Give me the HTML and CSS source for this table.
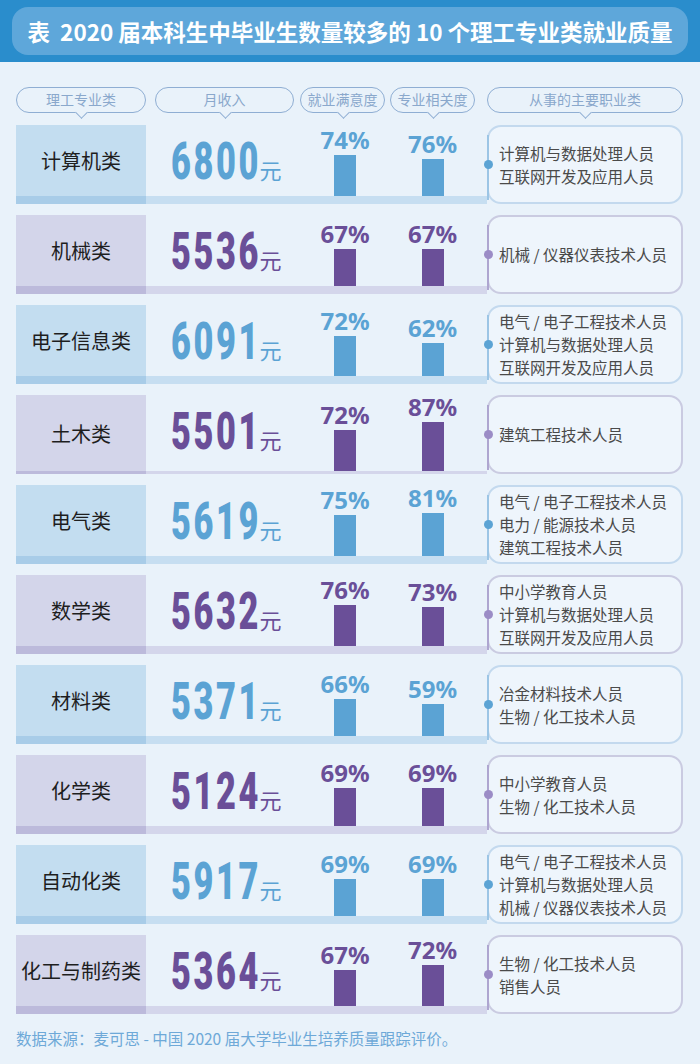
FILE: index.html
```html
<!DOCTYPE html>
<html lang="zh-CN">
<head>
<meta charset="utf-8">
<title>2020届理工专业类就业质量</title>
<link rel="stylesheet" href="styles.css">
</head>
<body>
<div class="titlebar">
  <div class="titlepill">表&nbsp; 2020 届本科生中毕业生数量较多的 10 个理工专业类就业质量</div>
</div>

<div class="heads">
  <div class="hp hp-major">理工专业类</div>
  <div class="hp hp-income">月收入</div>
  <div class="hp hp-pct">就业满意度</div>
  <div class="hp hp-pct">专业相关度</div>
  <div class="hp hp-job">从事的主要职业类</div>
</div>

<div class="rows">
  <div class="row blue">
    <div class="main">
      <div class="cells">
        <div class="label">计算机类</div>
        <div class="income"><span class="num">6800</span><span class="yuan">元</span></div>
        <div class="pct"><span class="pv">74%</span><span class="bar" style="height:41px"></span></div>
        <div class="pct"><span class="pv">76%</span><span class="bar" style="height:37px"></span></div>
      </div>
      <div class="strip"></div>
    </div>
    <div class="jobs"><span>计算机与数据处理人员</span><span>互联网开发及应用人员</span></div>
  </div>

  <div class="row purple">
    <div class="main">
      <div class="cells">
        <div class="label">机械类</div>
        <div class="income"><span class="num">5536</span><span class="yuan">元</span></div>
        <div class="pct"><span class="pv">67%</span><span class="bar" style="height:37px"></span></div>
        <div class="pct"><span class="pv">67%</span><span class="bar" style="height:37px"></span></div>
      </div>
      <div class="strip"></div>
    </div>
    <div class="jobs"><span>机械 / 仪器仪表技术人员</span></div>
  </div>

  <div class="row blue">
    <div class="main">
      <div class="cells">
        <div class="label">电子信息类</div>
        <div class="income"><span class="num">6091</span><span class="yuan">元</span></div>
        <div class="pct"><span class="pv">72%</span><span class="bar" style="height:40px"></span></div>
        <div class="pct"><span class="pv">62%</span><span class="bar" style="height:33px"></span></div>
      </div>
      <div class="strip"></div>
    </div>
    <div class="jobs"><span>电气 / 电子工程技术人员</span><span>计算机与数据处理人员</span><span>互联网开发及应用人员</span></div>
  </div>

  <div class="row purple">
    <div class="main">
      <div class="cells">
        <div class="label">土木类</div>
        <div class="income"><span class="num">5501</span><span class="yuan">元</span></div>
        <div class="pct"><span class="pv">72%</span><span class="bar" style="height:41px"></span></div>
        <div class="pct"><span class="pv">87%</span><span class="bar" style="height:49px"></span></div>
      </div>
      <div class="strip"></div>
    </div>
    <div class="jobs"><span>建筑工程技术人员</span></div>
  </div>

  <div class="row blue">
    <div class="main">
      <div class="cells">
        <div class="label">电气类</div>
        <div class="income"><span class="num">5619</span><span class="yuan">元</span></div>
        <div class="pct"><span class="pv">75%</span><span class="bar" style="height:41px"></span></div>
        <div class="pct"><span class="pv">81%</span><span class="bar" style="height:43px"></span></div>
      </div>
      <div class="strip"></div>
    </div>
    <div class="jobs"><span>电气 / 电子工程技术人员</span><span>电力 / 能源技术人员</span><span>建筑工程技术人员</span></div>
  </div>

  <div class="row purple">
    <div class="main">
      <div class="cells">
        <div class="label">数学类</div>
        <div class="income"><span class="num">5632</span><span class="yuan">元</span></div>
        <div class="pct"><span class="pv">76%</span><span class="bar" style="height:41px"></span></div>
        <div class="pct"><span class="pv">73%</span><span class="bar" style="height:39px"></span></div>
      </div>
      <div class="strip"></div>
    </div>
    <div class="jobs"><span>中小学教育人员</span><span>计算机与数据处理人员</span><span>互联网开发及应用人员</span></div>
  </div>

  <div class="row blue">
    <div class="main">
      <div class="cells">
        <div class="label">材料类</div>
        <div class="income"><span class="num">5371</span><span class="yuan">元</span></div>
        <div class="pct"><span class="pv">66%</span><span class="bar" style="height:37px"></span></div>
        <div class="pct"><span class="pv">59%</span><span class="bar" style="height:32px"></span></div>
      </div>
      <div class="strip"></div>
    </div>
    <div class="jobs"><span>冶金材料技术人员</span><span>生物 / 化工技术人员</span></div>
  </div>

  <div class="row purple">
    <div class="main">
      <div class="cells">
        <div class="label">化学类</div>
        <div class="income"><span class="num">5124</span><span class="yuan">元</span></div>
        <div class="pct"><span class="pv">69%</span><span class="bar" style="height:38px"></span></div>
        <div class="pct"><span class="pv">69%</span><span class="bar" style="height:38px"></span></div>
      </div>
      <div class="strip"></div>
    </div>
    <div class="jobs"><span>中小学教育人员</span><span>生物 / 化工技术人员</span></div>
  </div>

  <div class="row blue">
    <div class="main">
      <div class="cells">
        <div class="label">自动化类</div>
        <div class="income"><span class="num">5917</span><span class="yuan">元</span></div>
        <div class="pct"><span class="pv">69%</span><span class="bar" style="height:37px"></span></div>
        <div class="pct"><span class="pv">69%</span><span class="bar" style="height:37px"></span></div>
      </div>
      <div class="strip"></div>
    </div>
    <div class="jobs"><span>电气 / 电子工程技术人员</span><span>计算机与数据处理人员</span><span>机械 / 仪器仪表技术人员</span></div>
  </div>

  <div class="row purple">
    <div class="main">
      <div class="cells">
        <div class="label">化工与制药类</div>
        <div class="income"><span class="num">5364</span><span class="yuan">元</span></div>
        <div class="pct"><span class="pv">67%</span><span class="bar" style="height:36px"></span></div>
        <div class="pct"><span class="pv">72%</span><span class="bar" style="height:41px"></span></div>
      </div>
      <div class="strip"></div>
    </div>
    <div class="jobs"><span>生物 / 化工技术人员</span><span>销售人员</span></div>
  </div>
</div>

<div class="source">数据来源：麦可思 - 中国 2020 届大学毕业生培养质量跟踪评价。</div>
</body>
</html>
```

FILE: styles.css
```css
* { box-sizing: border-box; }
html, body { margin: 0; padding: 0; }
body {
  width: 700px;
  height: 1064px;
  overflow: hidden;
  background: #e9f2fa;
  font-family: "Noto Sans CJK SC", "Noto Sans", sans-serif;
  color: #222;
}

.titlebar {
  height: 62px;
  background: #2a8dcc;
  padding: 7px 12px;
}
.titlepill {
  height: 48px;
  border-radius: 16px;
  background: #5ea7da;
  color: #fff;
  font-weight: 700;
  font-size: 22.5px;
  line-height: 48px;
  text-align: center;
  white-space: nowrap;
}

.heads {
  display: flex;
  padding: 25px 0 0 16px;
  height: 63px;
}
.hp {
  position: relative;
  height: 26px;
  border: 1.5px solid #8faed3;
  border-radius: 13px;
  color: #8aa8cc;
  font-size: 14px;
  line-height: 23px;
  text-align: center;
  white-space: nowrap;
}
.hp::after {
  content: "";
  position: absolute;
  left: 50%;
  bottom: -5px;
  width: 8px;
  height: 8px;
  margin-left: -4px;
  background: #e9f2fa;
  border-right: 1.5px solid #8faed3;
  border-bottom: 1.5px solid #8faed3;
  transform: rotate(45deg);
}
.hp-major { width: 130px; margin-right: 9px; }
.hp-income { width: 139px; margin-right: 6px; }
.hp-pct { width: 85px; margin-right: 5px; }
.hp-pct + .hp-pct { margin-right: 12px; }
.hp-job { width: 196px; }

.rows {
  display: flex;
  flex-direction: column;
  gap: 11px;
  padding-left: 16px;
}
.row {
  display: flex;
  height: 79px;
}
.main {
  width: 471px;
  display: flex;
  flex-direction: column;
}
.cells {
  flex: 1;
  display: flex;
}
.label {
  width: 130px;
  display: flex;
  align-items: center;
  justify-content: center;
  font-size: 20px;
  color: #1e1e1e;
  white-space: nowrap;
}
.income {
  width: 154px;
  padding: 11px 0 0 25px;
  white-space: nowrap;
  line-height: 1;
}
.num {
  display: inline-block;
  font-family: "Roboto", "Liberation Sans", sans-serif;
  font-weight: 900;
  font-size: 52px;
  letter-spacing: 4px;
  transform: scaleX(0.66);
  transform-origin: 0 0;
  margin-right: -48px;
}
.yuan {
  font-size: 22px;
}
.pct {
  width: 90px;
  display: flex;
  flex-direction: column;
  align-items: center;
  justify-content: flex-end;
}
.pct + .pct { width: 97px; padding-right: 12px; }
.pv {
  font-family: "Noto Sans", "Liberation Sans", sans-serif;
  font-weight: 700;
  font-size: 24px;
  line-height: 24px;
  margin-bottom: 3px;
}
.bar {
  width: 22px;
}
.strip { height: 8px; }

.jobs {
  position: relative;
  width: 196px;
  border: 2px solid #c4d9ed;
  border-radius: 14px;
  background: #eef5fc;
  padding-left: 10px;
  display: flex;
  flex-direction: column;
  justify-content: center;
  font-size: 15.5px;
  line-height: 23px;
  color: #4a4a4a;
  white-space: nowrap;
}
.jobs::before {
  content: "";
  position: absolute;
  left: -2px;
  top: 8px;
  bottom: 2px;
  width: 2px;
}
.jobs::after {
  content: "";
  position: absolute;
  left: -5px;
  top: 50%;
  width: 9px;
  height: 9px;
  margin-top: -5px;
  border-radius: 50%;
}

/* blue theme */
.blue .label { background: #c3ddf0; }
.blue .strip { background: linear-gradient(to right, #a8cce8 0, #a8cce8 130px, #c6def1 130px); }
.blue .num, .blue .yuan, .blue .pv { color: #5ba3d4; }
.blue .bar { background: #5ba3d4; }
.blue .jobs { border-color: #c3d9ee; }
.blue .jobs::before { background: #9cc5e5; }
.blue .jobs::after { background: #5ba3d4; }

/* purple theme */
.purple .label { background: #d3d5ea; }
.purple .strip { background: linear-gradient(to right, #bcbadb 0, #bcbadb 130px, #d4d6eb 130px); }
.purple .num, .purple .yuan, .purple .pv { color: #6a4f98; }
.purple .bar { background: #6a4f98; }
.purple .jobs { border-color: #cacbe1; }
.purple .jobs::before { background: #aea6d0; }
.purple .jobs::after { background: #9b8cc6; }

.source {
  padding: 13px 0 0 16px;
  font-size: 15.5px;
  color: #6ea9d8;
  white-space: nowrap;
}
```
